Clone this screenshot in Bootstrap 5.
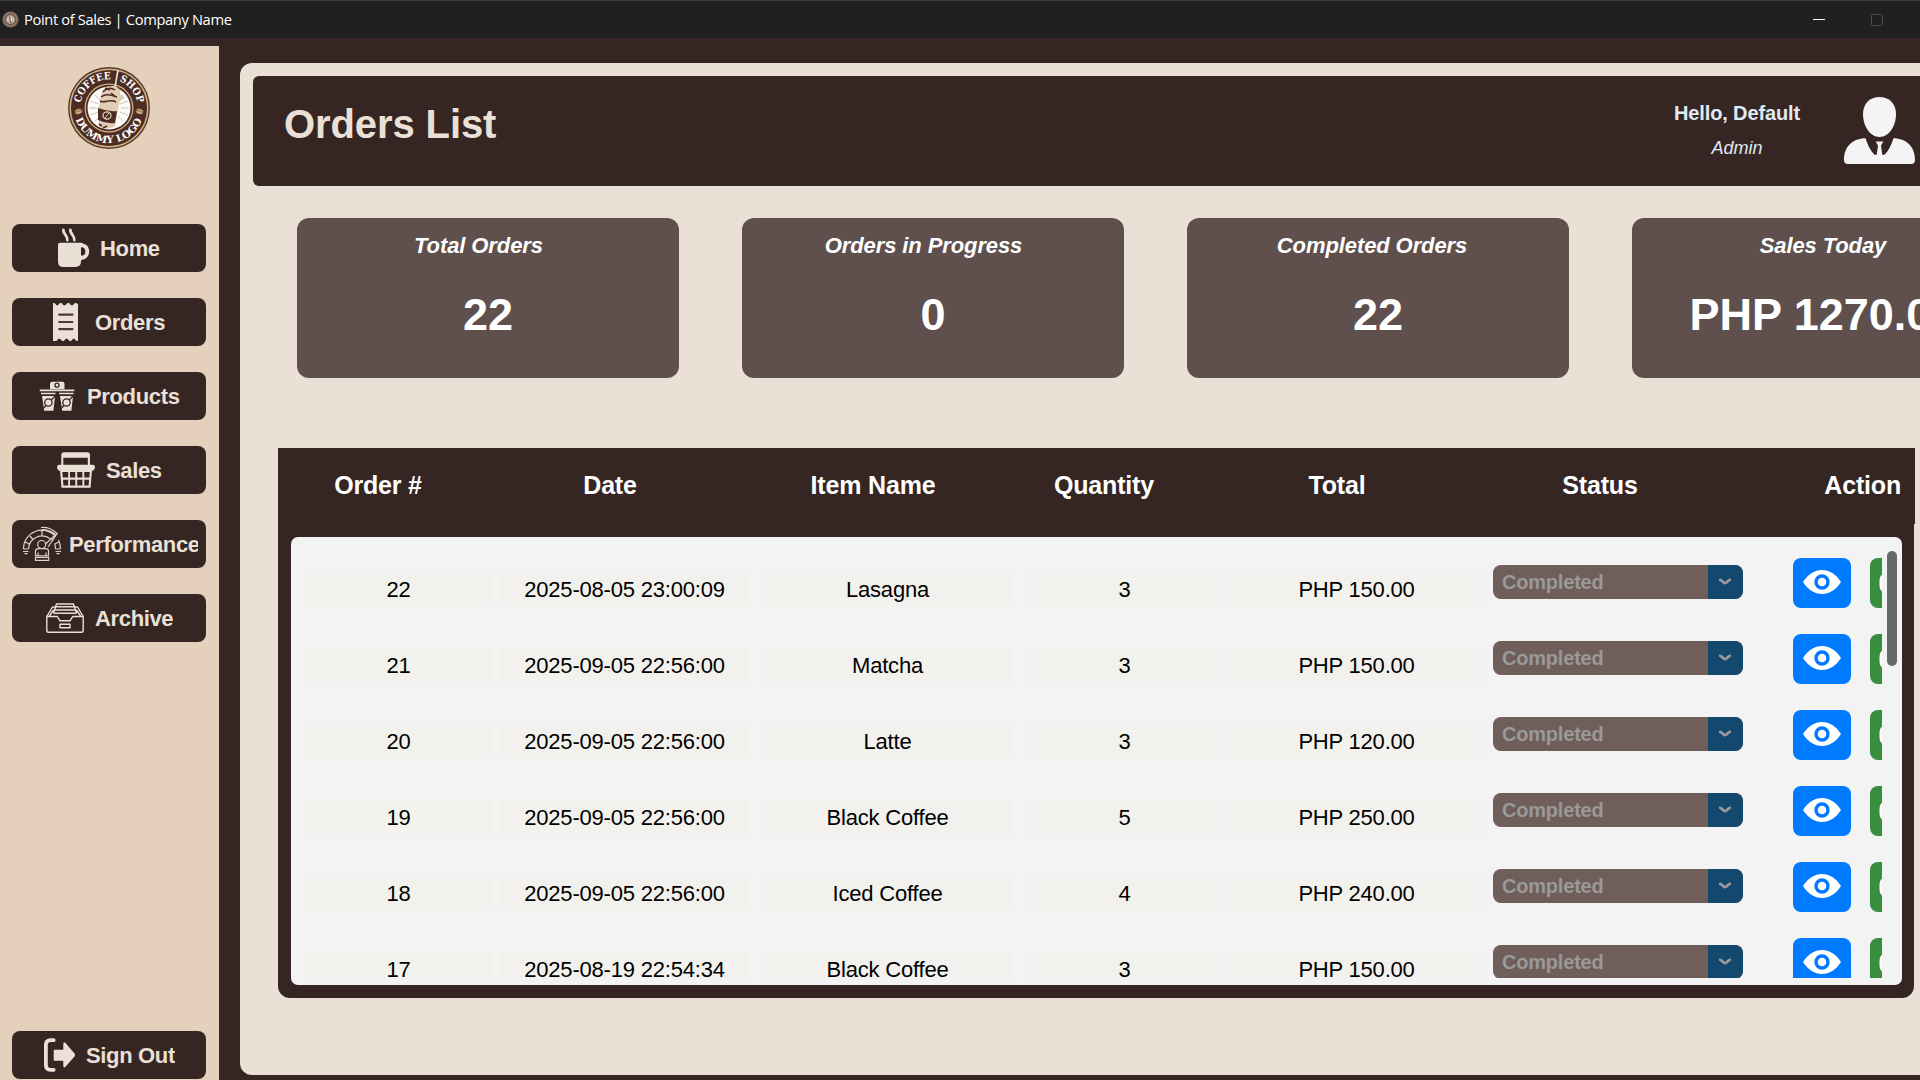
<!DOCTYPE html>
<html lang="en">
<head>
<meta charset="utf-8">
<title>Point of Sales | Company Name</title>
<link rel="stylesheet" href="https://cdn.jsdelivr.net/npm/bootstrap@5.3.0/dist/css/bootstrap.min.css">
<style>
:root{--dark:#352624;--cream:#eae0d6;--tan:#e4d0bb}
body{width:1920px;height:1080px;overflow:hidden;background:var(--dark);font-family:"Liberation Sans",Arial,sans-serif;line-height:1.2}
svg{display:block;flex:none}
.titlebar{height:38px;background:#202020;border-top:1px solid #3f3f3f;color:#fff;padding:0 37px 0 2px;font:14.7px/36px "Open Sans","Noto Sans",sans-serif}
.titlebar .app-name{margin:-2px 0 0 5px;letter-spacing:-.36px}
.shell{height:1042px}
.sidebar{width:219px;margin-top:8px;background:var(--tan);padding:21px 13px 1px 12px}
.menu{margin-top:75px;gap:26px}
.side-btn{height:48px;border-radius:8px;background:var(--dark);color:var(--cream);font-weight:700;font-size:22px;letter-spacing:-.35px;padding:0 8px 0 0;overflow:hidden;white-space:nowrap}
.side-btn span{overflow:hidden;line-height:30px;padding-top:2px}
.i-home{margin:0 6px 0 42px}.i-orders{margin:0 9px 0 34px}.i-products{margin:0 10px 0 25px}
.i-sales{margin:0 10px 0 44px}.i-perf{margin:0 7px 0 10px}.i-archive{margin:0 10px 0 33px}.i-out{margin:0 6px 0 28px}
.main-panel{margin:25px 0 5px 21px;width:1680px;background:var(--cream);border-radius:12px 0 0 12px;padding:13px 0 0 13px;overflow:hidden}
.page-head{height:110px;background:var(--dark);border-radius:6px 0 0 6px;padding:0 4px 0 31px}
.page-head h1{font-size:40px;font-weight:700;color:var(--cream);margin:0;padding-top:25px;line-height:46px;letter-spacing:-.1px}
.user-info{width:140px;margin-right:36px;padding-top:24px;color:#e0eaf3}
.hello{font-size:20px;font-weight:700;line-height:26px;letter-spacing:-.12px;white-space:nowrap}
.role{font-size:18px;font-style:italic;line-height:24px;margin-top:10px}
.avatar{margin-top:20px}
.stats{margin:32px 0 0 44px;gap:63px}
.stat{width:382px;height:160px;flex:none;border-radius:12px;background:#60504d;color:#fff;font-weight:700}
.stat-label{font-size:22px;font-style:italic;line-height:26px;padding-top:15px;letter-spacing:-.1px}
.stat-value{font-size:45px;line-height:52px;margin-top:30px}
.shift-a{margin-right:19px}.shift-b{margin-right:19px}.shift-c{margin-right:12px}
.orders{margin:70px 0 0 25px;width:1637px}
.orders-head{height:76px;background:var(--dark);display:grid;grid-template-columns:200px 264px 262px 200px 266px 260px 185px;color:#fff;font-weight:700;font-size:25px;text-align:center;line-height:30px;padding-top:22px;letter-spacing:-.18px}
.orders-head div:last-child{text-align:right;padding-right:14px}
.orders-body{width:1636px;height:474px;background:var(--dark);border-radius:0 0 12px 12px;padding:13px 12px 13px 13px}
.sheet{height:448px;background:#f3f3f3;border-radius:7px;padding:14px 5px 7px 14px}
.viewport{width:1577px;height:427px;overflow:hidden;padding-top:7px}
.order{height:76px;width:1640px}
.cell{height:34px;margin-top:14px;background:#f2f1ed;color:#000;font-size:22px;line-height:36px;text-align:center;letter-spacing:-.2px;padding-left:1px;flex:none}
.w-s{width:186px}.w-l{width:250px}
.g8{margin-right:8px}.g13{margin-right:13px}.g19{margin-right:19px}.g14{margin-right:14px}.g12{margin-right:12px}
.combo{width:250px;height:34px;margin:7px 50px 0 0;border-radius:8px;overflow:hidden;background:#705e5b;color:#999;font-weight:700;font-size:20px;line-height:35px;flex:none;letter-spacing:-.2px}
.combo span{flex:1;padding-left:9px}
.combo i{width:35px;background:#14496f;padding-right:1px}
.view-btn,.ok-btn{width:58px;height:50px;border-radius:8px;flex:none}
.view-btn{background:#007bff;margin-right:19px}.ok-btn{background:#388e3c}
.thumb{width:10px;height:115px;border-radius:5px;background:#696969}
</style>
</head>
<body>
<svg width="0" height="0" class="position-absolute">
  <symbol id="eye" viewBox="0 0 38 24"><path d="M0 12C5 4 12 0 19 0s14 4 19 12c-5 8-12 12-19 12S5 20 0 12z" fill="#fff"/><circle cx="19" cy="12" r="6" fill="#fff" stroke="#007bff" stroke-width="3.4"/></symbol>
  <symbol id="chev" viewBox="0 0 14 8"><path d="M2.2 1.8C4 2.2 5.2 5.2 7 5.2s3-3 4.800-3.400" fill="none" stroke="#999" stroke-width="2.800" stroke-linecap="round"/></symbol>
  <symbol id="check" viewBox="0 0 58 50"><rect x="9.500" y="15" width="38" height="20" rx="7" fill="#fff"/></symbol>
</svg>

<header class="titlebar d-flex align-items-center">
  <svg width="17" height="17" viewBox="0 0 17 17"><circle cx="8.500" cy="8.500" r="8.300" fill="#6d5549"/><circle cx="8.500" cy="8.500" r="6.500" fill="none" stroke="#947b6c" stroke-width="1.500"/><circle cx="8.500" cy="8.500" r="4.300" fill="#cbbfb5"/><path d="M7 5h3.500L10 12H7.500z" fill="#8a7465"/><path d="M9 5l.5 5" stroke="#fff"/></svg>
  <span class="app-name">Point of Sales | Company Name</span>
  <svg class="ms-auto" width="70" height="14" viewBox="0 0 70 14"><path d="M0 6.500h12" stroke="#fff"/><rect x="58.500" y="1.500" width="11" height="11" rx="1" fill="none" stroke="#4c4c4c"/></svg>
</header>

<div class="shell d-flex">
  <nav class="sidebar d-flex flex-column flex-shrink-0">
    <svg class="align-self-center" width="82" height="82" viewBox="0 0 82 82">
      <defs><path id="arcTop" d="M12.200 41a28.800 28.800 0 0 1 57.600 0"/><path id="arcBot" d="M6 41a35 35 0 0 0 70 0"/></defs>
      <circle cx="41" cy="41" r="41" fill="#57392e"/>
      <circle cx="41" cy="41" r="38.800" fill="none" stroke="#cfb184" stroke-width="1.500"/>
      <circle cx="41" cy="41" r="37.500" fill="#4c2c23"/>
      <circle cx="41" cy="41" r="24.500" fill="#cfb184"/>
      <circle cx="41" cy="41" r="23.200" fill="#4c2c23"/>
      <circle cx="41" cy="41" r="21.500" fill="#fdfbf8"/>
      <g stroke="#b8ada5" stroke-width=".7"><path d="M21 41h8M22 34l8 3M22 48l8-3M27 28l6 6M27 54l6-5M61 41h-8M60 34l-8 3M60 48l-8-3M55 28l-5 6M55 54l-5-5"/></g>
      <path d="M50 3L47 20" stroke="#f0e4d0" stroke-width="1.600"/>
      <path d="M33 28c1-6 6-9 12-9 5 0 8 4 7 8l5 4-5 3-1 3-4 22q-7 5-16 1l-1-19 2-5z" fill="#e0cdb4"/>
      <path d="M35 25c4-5 9-4 12-2M33 30c5-4 10-2 16 0M32 34c5 3 9-3 16 1M37 21l5 2M43 26l5 4" stroke="#4c2c23" stroke-width="1.500" fill="none"/>
      <path d="M30 41q10 4 19 3l-2 12q-9 1-17-3z" fill="#4c2c23"/>
      <path d="M31 57l3 2M35 61l4-2" stroke="#4c2c23" stroke-width="1.700"/>
      <ellipse cx="39" cy="48.500" rx="4" ry="3.600" fill="none" stroke="#e9d9c0" stroke-width="1.200"/><path d="M37 51l4-5" stroke="#e9d9c0"/>
      <g fill="#cfb184" stroke="#4c2c23" stroke-width=".6"><ellipse cx="10.500" cy="44.500" rx="4" ry="2.800" transform="rotate(-15 10.500 44.500)"/><ellipse cx="71.500" cy="44.500" rx="4" ry="2.800" transform="rotate(15 71.500 44.500)"/><path d="M7 45.500q3-2 7-2M68 43.500q4 0 7 2"/></g>
      <g fill="#fff" font-family="DejaVu Serif,serif" font-weight="700" font-size="10">
        <text><textPath href="#arcTop" startOffset="5" textLength="42" lengthAdjust="spacingAndGlyphs">COFFEE</textPath></text>
        <text><textPath href="#arcTop" startOffset="55.500" textLength="30" lengthAdjust="spacingAndGlyphs">SHOP</textPath></text>
        <text><textPath href="#arcBot" startOffset="11.500" textLength="86" lengthAdjust="spacingAndGlyphs">DUMMY LOGO</textPath></text>
      </g>
    </svg>

    <div class="menu d-flex flex-column">
      <a class="side-btn btn border-0 d-flex align-items-center text-start"><svg class="i-home" width="40" height="40" viewBox="0 0 40 40" fill="#eae0d6"><path fill-rule="evenodd" d="M6 14.700h21q2 0 2.500 1.300c3 0 5.700 3 5.700 7.500S32 31.500 28 31.800q-1 .2-1 1.500 0 5.700-5.500 5.700h-12Q4 39 4 33.500V16.700q0-2 2-2zM27 19.200v8.600q4.400 0 4.400-4.300T27 19.200z"/><path d="M9.500 2c-1 3 4.300 5.500 3.800 10M16.500 2c-1 3 4.300 5.500 3.800 10" fill="none" stroke="#eae0d6" stroke-width="2.800" stroke-linecap="round"/></svg><span>Home</span></a>
      <a class="side-btn btn border-0 d-flex align-items-center text-start"><svg class="i-orders" width="40" height="40" viewBox="0 0 40 40"><path fill="#eae0d6" d="M7 1h1.500l2 2.300h1.200L14 1h1.500l2 2.300h1.800L21.500 1H23l2.200 2.300h1.500L29 1h1l2 1v37h-1.500l-2-2.300h-1.300L25 39h-1.500l-2.200-2.300h-1.500L17.700 39h-1.500L14 36.700h-1.500L10.300 39H7z"/><path d="M13.200 12.700h13.200M13.200 20h13.200M13.200 27.200h13.200" stroke="#4b3934" stroke-width="2.200" stroke-linecap="round"/></svg><span>Orders</span></a>
      <a class="side-btn btn border-0 d-flex align-items-center text-start"><svg class="i-products" width="40" height="40" viewBox="0 0 40 40"><g fill="#eae0d6"><path d="M15 5.700h10.500q2 0 2 2v5.600H13V7.700q0-2 2-2z"/><path d="M2.700 13.500h34.600v1.700H2.700z"/><path d="M4 16.700h14.500v1.500H4zM22 16.700h14.500v1.500H22zM5 20h13l-1.600 14.700H7.200zM23 20h13l-1.600 14.700h-9.200z"/></g><g fill="#eae0d6" stroke="#352624" stroke-width="1.300"><circle cx="20" cy="9.200" r="2"/><path d="M6.500 32L18 20M24.500 32L36 20"/><circle cx="11.400" cy="26.500" r="3.700"/><circle cx="29.500" cy="26.500" r="3.700"/></g></svg><span>Products</span></a>
      <a class="side-btn btn border-0 d-flex align-items-center text-start"><svg class="i-sales" width="40" height="40" viewBox="0 0 40 40" fill="#eae0d6"><path fill-rule="evenodd" d="M8 2.300h23.500q2.500 0 2.500 2.700v10H5.300V5Q5.300 2.300 8 2.300zM7.300 7.800V15h24.500V7.800z"/><path d="M3 14.700h34q2 0 2 2.500t-2 3.500H3q-2-1-2-3.500t2-2.500z"/><path fill-rule="evenodd" d="M4 20h32l-1.500 17.800h-29zM6.300 22l.5 5.500h5.400V22zM14 22v5.500h5.300V22zM21.200 22v5.500h5.200V22zM28.300 22v5.500h5l.5-5.500zM7 29.700l.4 5.900h4.800v-5.900zM14 29.700v5.900h5.300v-5.900zM21.200 29.700v5.900h5.200v-5.900zM28.300 29.700v5.900h4.300l.5-5.900z"/></svg><span>Sales</span></a>
      <a class="side-btn btn border-0 d-flex align-items-center text-start"><svg class="i-perf" width="40" height="40" viewBox="0 0 40 40" fill="none" stroke="#dfd3c8" stroke-width="1.200"><path d="M1.500 25a18.500 18.500 0 0 1 32-13M36.500 16a18.500 18.500 0 0 1 2 9M6.500 25a13.500 13.500 0 0 1 22-10M32.500 19.500a13.500 13.500 0 0 1 1 5.500M1.500 25h5M33.500 25h5M1 27.500h5.500M33.500 27.500H39M2.500 29.700h3M34.500 29.700h3M20 6.500v5M8 12l3 3.500M3.300 18l4 2M33 20l3.700-2M19 3.500c6-.7 11 1.500 15.500 5.500M20 5.500c5 0 9 1.500 13 4.500"/><path d="M23.500 20L35.500 9 26 23M29.500 14.500l2 2"/><circle cx="19.700" cy="20.500" r="4"/><path d="M13.500 31.800V27q0-2.300 3-2.300h7q3 0 3 2.300v4.800zM16 28.500v3M24 28.500v3M13.500 33.500h13.200v2.800H13.500z"/></svg><span>Performance</span></a>
      <a class="side-btn btn border-0 d-flex align-items-center text-start"><svg class="i-archive" width="40" height="40" viewBox="0 0 40 40" fill="none" stroke="#eae0d6" stroke-width="1.400" stroke-linejoin="round"><path d="M1.800 18.500h10.500l2.700 4.300h10l2.700-4.300h10.500v14q0 1.800-1.800 1.800H3.600q-1.800 0-1.800-1.800z"/><path d="M1.800 18.500L7.500 9h2.300M38.200 18.500L32.500 9h-2.300M8.500 15.200L11.500 6h17l3 9.200M4.500 18l4-6M35.500 18l-4-6M10.500 8.700h19M9.500 12h21M8.500 15.200h23"/><path d="M15 26.300h10v3.500H15z"/></svg><span>Archive</span></a>
    </div>
    <a class="side-btn btn border-0 d-flex align-items-center text-start mt-auto"><svg class="i-out" width="40" height="40" viewBox="0 0 40 40"><path d="M13.700 5.200h-3q-4.800 0-4.800 4.800v20q0 4.800 4.800 4.800h3" fill="none" stroke="#eae0d6" stroke-width="3.800" stroke-linecap="round"/><path d="M14.700 14.700h8.600V9q0-2.500 2-1.200L34.500 18.500q1.300 1.500 0 3L25.300 32q-2 1.300-2-1.200v-5.100h-8.600q-1 0-1-1v-9q0-1 1-1z" fill="#eae0d6"/></svg><span>Sign Out</span></a>
  </nav>

  <main class="main-panel flex-shrink-0">
    <section class="page-head d-flex">
      <h1>Orders List</h1>
      <div class="user-info ms-auto text-center"><div class="hello">Hello, Default</div><div class="role">Admin</div></div>
      <svg class="avatar" width="73" height="70" viewBox="0 0 73 70" fill="#f4f4f4"><path d="M36.500 1C46 1 53 7.500 53 18c0 12-7 23-16.500 23S20 30 20 18C20 7.500 27 1 36.500 1z"/><path d="M22.500 42.300c2 6.700 5 12.500 9 16.500h2.200l1.300-9-2.300-4.300h7.600L38 49.800l1.300 9h2.200c4-4 7-9.800 9-16.500C63 42.500 72 50 72 64q0 4-4 4H5q-4 0-4-4C1 50 10 42.500 22.500 42.300z"/></svg>
    </section>

    <section class="stats d-flex text-center">
      <div class="stat"><div class="stat-label shift-a">Total Orders</div><div class="stat-value">22</div></div>
      <div class="stat"><div class="stat-label shift-b">Orders in Progress</div><div class="stat-value">0</div></div>
      <div class="stat"><div class="stat-label shift-c">Completed Orders</div><div class="stat-value">22</div></div>
      <div class="stat"><div class="stat-label">Sales Today</div><div class="stat-value">PHP 1270.00</div></div>
    </section>

    <section class="orders">
      <div class="orders-head"><div>Order #</div><div>Date</div><div>Item Name</div><div>Quantity</div><div>Total</div><div>Status</div><div>Action</div></div>
      <div class="orders-body">
        <div class="sheet d-flex justify-content-between">
          <div class="viewport">
            <div class="order d-flex align-items-start"><div class="cell w-s g8">22</div><div class="cell w-l g13">2025-08-05 23:00:09</div><div class="cell w-l g19">Lasagna</div><div class="cell w-s g14">3</div><div class="cell w-l g12">PHP 150.00</div><div class="combo d-flex"><span>Completed</span><i class="d-flex align-items-center justify-content-center"><svg width="14" height="8"><use href="#chev"/></svg></i></div><div class="view-btn d-flex justify-content-center"><svg class="mt-2 pt-1" width="38" height="32"><use href="#eye" width="38" height="24"/></svg></div><div class="ok-btn"><svg width="58" height="50"><use href="#check"/></svg></div></div>
            <div class="order d-flex align-items-start"><div class="cell w-s g8">21</div><div class="cell w-l g13">2025-09-05 22:56:00</div><div class="cell w-l g19">Matcha</div><div class="cell w-s g14">3</div><div class="cell w-l g12">PHP 150.00</div><div class="combo d-flex"><span>Completed</span><i class="d-flex align-items-center justify-content-center"><svg width="14" height="8"><use href="#chev"/></svg></i></div><div class="view-btn d-flex justify-content-center"><svg class="mt-2 pt-1" width="38" height="32"><use href="#eye" width="38" height="24"/></svg></div><div class="ok-btn"><svg width="58" height="50"><use href="#check"/></svg></div></div>
            <div class="order d-flex align-items-start"><div class="cell w-s g8">20</div><div class="cell w-l g13">2025-09-05 22:56:00</div><div class="cell w-l g19">Latte</div><div class="cell w-s g14">3</div><div class="cell w-l g12">PHP 120.00</div><div class="combo d-flex"><span>Completed</span><i class="d-flex align-items-center justify-content-center"><svg width="14" height="8"><use href="#chev"/></svg></i></div><div class="view-btn d-flex justify-content-center"><svg class="mt-2 pt-1" width="38" height="32"><use href="#eye" width="38" height="24"/></svg></div><div class="ok-btn"><svg width="58" height="50"><use href="#check"/></svg></div></div>
            <div class="order d-flex align-items-start"><div class="cell w-s g8">19</div><div class="cell w-l g13">2025-09-05 22:56:00</div><div class="cell w-l g19">Black Coffee</div><div class="cell w-s g14">5</div><div class="cell w-l g12">PHP 250.00</div><div class="combo d-flex"><span>Completed</span><i class="d-flex align-items-center justify-content-center"><svg width="14" height="8"><use href="#chev"/></svg></i></div><div class="view-btn d-flex justify-content-center"><svg class="mt-2 pt-1" width="38" height="32"><use href="#eye" width="38" height="24"/></svg></div><div class="ok-btn"><svg width="58" height="50"><use href="#check"/></svg></div></div>
            <div class="order d-flex align-items-start"><div class="cell w-s g8">18</div><div class="cell w-l g13">2025-09-05 22:56:00</div><div class="cell w-l g19">Iced Coffee</div><div class="cell w-s g14">4</div><div class="cell w-l g12">PHP 240.00</div><div class="combo d-flex"><span>Completed</span><i class="d-flex align-items-center justify-content-center"><svg width="14" height="8"><use href="#chev"/></svg></i></div><div class="view-btn d-flex justify-content-center"><svg class="mt-2 pt-1" width="38" height="32"><use href="#eye" width="38" height="24"/></svg></div><div class="ok-btn"><svg width="58" height="50"><use href="#check"/></svg></div></div>
            <div class="order d-flex align-items-start"><div class="cell w-s g8">17</div><div class="cell w-l g13">2025-08-19 22:54:34</div><div class="cell w-l g19">Black Coffee</div><div class="cell w-s g14">3</div><div class="cell w-l g12">PHP 150.00</div><div class="combo d-flex"><span>Completed</span><i class="d-flex align-items-center justify-content-center"><svg width="14" height="8"><use href="#chev"/></svg></i></div><div class="view-btn d-flex justify-content-center"><svg class="mt-2 pt-1" width="38" height="32"><use href="#eye" width="38" height="24"/></svg></div><div class="ok-btn"><svg width="58" height="50"><use href="#check"/></svg></div></div>
          </div>
          <div class="thumb"></div>
        </div>
      </div>
    </section>
  </main>
</div>
<script src="https://cdn.jsdelivr.net/npm/bootstrap@5.3.0/dist/js/bootstrap.bundle.min.js"></script>
</body>
</html>
